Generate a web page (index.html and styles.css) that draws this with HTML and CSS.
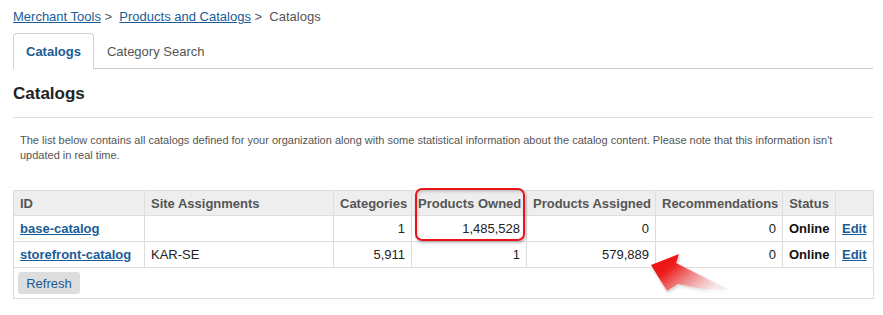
FILE: index.html
```html
<!DOCTYPE html>
<html>
<head>
  <title>Catalogs</title>
  <link rel="stylesheet" href="styles.css">
</head>
<body>
  <div class="page">
    <div class="breadcrumb">
      <a href="#">Merchant Tools</a>&nbsp;&gt;&nbsp; <a href="#">Products and Catalogs</a>&nbsp;&gt;&nbsp; Catalogs
    </div>

    <ul class="tabs">
      <li class="tab active">Catalogs</li>
      <li class="tab">Category Search</li>
    </ul>

    <h1>Catalogs</h1>
    <div class="rule"></div>

    <p class="intro">The list below contains all catalogs defined for your organization along with some statistical information about the catalog content. Please note that this information isn't updated in real time.</p>

    <div class="table-wrap">
      <table class="catalogs">
        <colgroup>
          <col style="width:131px">
          <col style="width:189px">
          <col style="width:78px">
          <col style="width:115px">
          <col style="width:129px">
          <col style="width:127px">
          <col style="width:53px">
          <col style="width:38px">
        </colgroup>
        <thead>
          <tr>
            <th>ID</th>
            <th>Site Assignments</th>
            <th class="num">Categories</th>
            <th>Products Owned</th>
            <th>Products Assigned</th>
            <th>Recommendations</th>
            <th class="center">Status</th>
            <th></th>
          </tr>
        </thead>
        <tbody>
          <tr>
            <td><a href="#" class="strong">base-catalog</a></td>
            <td></td>
            <td class="num">1</td>
            <td class="num">1,485,528</td>
            <td class="num">0</td>
            <td class="num">0</td>
            <td class="status">Online</td>
            <td><a href="#" class="strong">Edit</a></td>
          </tr>
          <tr>
            <td><a href="#" class="strong">storefront-catalog</a></td>
            <td>KAR-SE</td>
            <td class="num">5,911</td>
            <td class="num">1</td>
            <td class="num">579,889</td>
            <td class="num">0</td>
            <td class="status">Online</td>
            <td><a href="#" class="strong">Edit</a></td>
          </tr>
          <tr>
            <td colspan="8" class="footer-cell"><button type="button">Refresh</button></td>
          </tr>
        </tbody>
      </table>

      <!-- annotation overlays -->
      <div class="highlight"></div>
      <svg class="arrow" width="100" height="56" viewBox="0 0 100 56">
        <defs>
          <linearGradient id="arrowFill" x1="0" y1="0" x2="1" y2="0.6">
            <stop offset="0" stop-color="#f00a0a"/>
            <stop offset="0.35" stop-color="#ee1c1c"/>
            <stop offset="1" stop-color="#f4a0a0" stop-opacity="0.2"/>
          </linearGradient>
          <filter id="arrowShadow" x="-20%" y="-20%" width="140%" height="140%">
            <feDropShadow dx="1" dy="2" stdDeviation="1.5" flood-color="#000" flood-opacity="0.25"/>
          </filter>
        </defs>
        <polygon points="11,20 39,9 36,18 88,44 62,44 38,39 27,46" fill="url(#arrowFill)" filter="url(#arrowShadow)"/>
      </svg>
    </div>
  </div>
</body>
</html>
```

FILE: styles.css
```css
body {
  margin: 0;
  font-family: "Liberation Sans", Arial, sans-serif;
  font-size: 13px;
  color: #222;
  background: #fff;
}
a {
  color: #1a5c96;
}
.page {
  padding: 9px 10px 0 13px;
}
.breadcrumb {
  line-height: 16px;
  color: #555;
}
.breadcrumb a {
  color: #1a5c96;
}
.tabs {
  list-style: none;
  margin: 8px 0 0;
  padding: 0;
  display: flex;
  border-bottom: 1px solid #ccc;
  height: 35px;
}
.tab {
  padding: 0 12px;
  line-height: 35px;
  color: #555;
  border: 1px solid transparent;
  border-bottom: none;
}
.tab.active {
  color: #1a5c96;
  font-weight: bold;
  background: #fff;
  border-color: #d0d0d0;
  border-radius: 4px 4px 0 0;
  margin-bottom: -1px;
  height: 35px;
}
h1 {
  margin: 15px 0 0;
  font-size: 17px;
  line-height: 20px;
  color: #222;
}
.rule {
  margin-top: 13px;
  border-top: 1px solid #ddd;
}
.intro {
  margin: 15px 0 0;
  padding: 0 7px;
  font-size: 11px;
  line-height: 15px;
  color: #555;
}
.table-wrap {
  position: relative;
  margin-top: 27px;
}
.catalogs {
  width: 860px;
  table-layout: fixed;
  border-collapse: collapse;
  border: 1px solid #ddd;
}
.catalogs th,
.catalogs td {
  border: 1px solid #ddd;
  padding: 0 6px;
  text-align: left;
  white-space: nowrap;
}
.catalogs th {
  background: #eee;
  color: #555;
  height: 24px;
}
.catalogs td {
  height: 25px;
}
.catalogs .num {
  text-align: right;
}
.catalogs .center {
  text-align: center;
}
.catalogs .status {
  font-weight: bold;
  color: #111;
}
.strong {
  font-weight: bold;
}
.catalogs td.footer-cell {
  height: 30px;
  padding: 0 4px;
}
button {
  font-family: inherit;
  font-size: 13px;
  color: #1a5c96;
  background: #ddd;
  border: none;
  border-radius: 3px;
  width: 62px;
  height: 22px;
  padding: 0;
  cursor: pointer;
}
.highlight {
  position: absolute;
  left: 402px;
  top: -2px;
  width: 106px;
  height: 49px;
  border: 2px solid #e8131b;
  border-radius: 7px;
  box-shadow: 1px 2px 3px rgba(0, 0, 0, 0.25), inset 1px 2px 3px rgba(0, 0, 0, 0.15);
}
.arrow {
  position: absolute;
  left: 627px;
  top: 55px;
}
```
